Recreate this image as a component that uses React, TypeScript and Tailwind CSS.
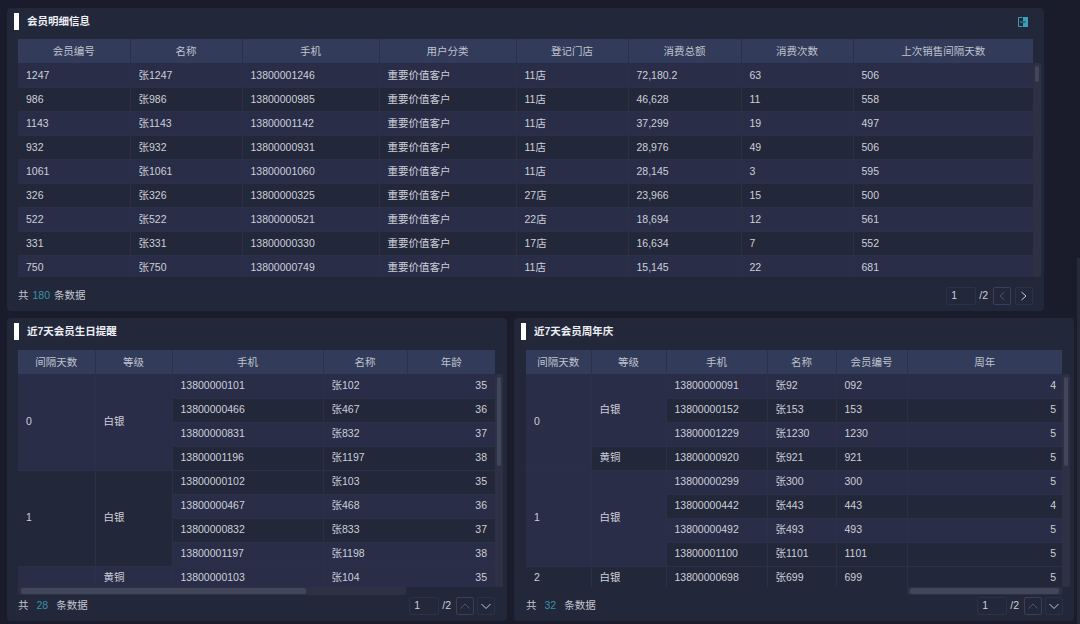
type Level = { name: string; rows: string[][] };
type Group = { day: string; dark?: boolean; levels: Level[] };

const leftGroups: Group[] = [
  { day: "0", levels: [{ name: "白银", rows: [["13800000101", "张102", "35"], ["13800000466", "张467", "36"], ["13800000831", "张832", "37"], ["13800001196", "张1197", "38"]] }] },
  { day: "1", dark: true, levels: [{ name: "白银", rows: [["13800000102", "张103", "35"], ["13800000467", "张468", "36"], ["13800000832", "张833", "37"], ["13800001197", "张1198", "38"]] }] },
  { day: "", levels: [{ name: "黄铜", rows: [["13800000103", "张104", "35"]] }] },
];

const rightGroups: Group[] = [
  { day: "0", levels: [{ name: "白银", rows: [["13800000091", "张92", "092", "4"], ["13800000152", "张153", "153", "5"], ["13800001229", "张1230", "1230", "5"]] }, { name: "黄铜", rows: [["13800000920", "张921", "921", "5"]] }] },
  { day: "1", levels: [{ name: "白银", rows: [["13800000299", "张300", "300", "5"], ["13800000442", "张443", "443", "4"], ["13800000492", "张493", "493", "5"], ["13800001100", "张1101", "1101", "5"]] }] },
  { day: "2", dark: true, levels: [{ name: "白银", rows: [["13800000698", "张699", "699", "5"]] }] },
];

const memberRows = [
  ["1247", "张1247", "13800001246", "重要价值客户", "11店", "72,180.2", "63", "506"],
  ["986", "张986", "13800000985", "重要价值客户", "11店", "46,628", "11", "558"],
  ["1143", "张1143", "13800001142", "重要价值客户", "11店", "37,299", "19", "497"],
  ["932", "张932", "13800000931", "重要价值客户", "11店", "28,976", "49", "506"],
  ["1061", "张1061", "13800001060", "重要价值客户", "11店", "28,145", "3", "595"],
  ["326", "张326", "13800000325", "重要价值客户", "27店", "23,966", "15", "500"],
  ["522", "张522", "13800000521", "重要价值客户", "22店", "18,694", "12", "561"],
  ["331", "张331", "13800000330", "重要价值客户", "17店", "16,634", "7", "552"],
  ["750", "张750", "13800000749", "重要价值客户", "11店", "15,145", "22", "681"],
];

const blueRow = "bg-[#292d48]";
const darkRow = "bg-[#23273a]";
const cell = "border-r border-b border-[#2b3049] px-[8px] text-[10.5px] text-[#cdd0d9] last:border-r-0";

function PanelTitle({ title }: { title: string }) {
  return (
    <div className="flex items-center gap-[8px] pl-[7px]">
      <span className="h-[17px] w-[5px] bg-white" />
      <span className="text-[10.5px] font-bold text-[#eceef2]">{title}</span>
    </div>
  );
}

function HeadRow({ labels }: { labels: string[] }) {
  return (
    <tr className="h-[24px] bg-[#333b5a]">
      {labels.map((label) => (
        <th key={label} className="border-r border-[#2a3150] pt-[2px] text-center text-[10.5px] font-normal text-[#bfc3cf] last:border-r-0">{label}</th>
      ))}
    </tr>
  );
}

function Widths({ widths }: { widths: number[] }) {
  return (
    <colgroup>
      {widths.map((w, i) => <col key={i} style={{ width: w }} />)}
    </colgroup>
  );
}

function GroupBody({ groups, numeric, numericPad, noDivider }: { groups: Group[]; numeric: number; numericPad: string; noDivider?: number }) {
  return (
    <tbody>
      {groups.map((g) => {
        const daySpan = g.levels.reduce((n, l) => n + l.rows.length, 0);
        let index = g.dark ? 1 : 0;
        return g.levels.map((level, li) =>
          level.rows.map((row, ri) => {
            const bg = index++ % 2 === 0 ? blueRow : darkRow;
            return (
              <tr key={row[0]} className={`h-[24px] ${bg}`}>
                {li === 0 && ri === 0 && <td rowSpan={daySpan} className={`${cell} ${g.dark ? darkRow : blueRow}`}>{g.day}</td>}
                {ri === 0 && <td rowSpan={level.rows.length} className={`${cell} ${bg}`}>{level.name}</td>}
                {row.map((v, i) => (
                  <td key={i} className={`${cell} ${i === numeric ? `text-right ${numericPad}` : ""} ${i === noDivider ? "border-r-transparent" : ""}`}>{v}</td>
                ))}
              </tr>
            );
          })
        );
      })}
    </tbody>
  );
}

function Pager({ vertical }: { vertical?: boolean }) {
  return (
    <div className="flex items-center">
      <div className="flex h-[18px] w-[30px] items-center rounded-[2px] border border-[#2c3148] pl-[4px] text-[10.5px] text-[#cdd0d9]">1</div>
      <span className="ml-[3px] text-[10.5px] text-[#cdd0d9]">/2</span>
      <button className="ml-[5px] flex h-[18px] w-[18px] items-center justify-center rounded-[2px] border border-[#3a4058]">
        <svg width="10" height="10" viewBox="0 0 10 10" fill="none" stroke="#4f5469" strokeWidth="1">
          <path d={vertical ? "M0.5 7.5 L5 3 L9.5 7.5" : "M7.5 1 L3 5 L7.5 9"} />
        </svg>
      </button>
      <button className={`flex h-[18px] w-[18px] items-center justify-center rounded-[2px] border border-[#2c3148] ${vertical ? "ml-[3px]" : "ml-[4px]"}`}>
        <svg width="10" height="10" viewBox="0 0 10 10" fill="none" stroke="#c6c9d3" strokeWidth="1">
          <path d={vertical ? "M0.5 3 L5 7.5 L9.5 3" : "M2.5 1 L7 5 L2.5 9"} />
        </svg>
      </button>
    </div>
  );
}

function VScroll({ thumb }: { thumb: string }) {
  return (
    <div className="w-[8px] shrink-0 rounded-[2px] bg-[#2e3144] px-[2px] pt-[3px]">
      <div className={`${thumb} rounded-[2px] bg-[#42465a]`} />
    </div>
  );
}

function Total({ count, gap }: { count: string; gap: string }) {
  return (
    <div className={`flex text-[10.5px] text-[#c2c5cf] ${gap}`}>
      <span>共</span>
      <span className="text-[#3a92a8]">{count}</span>
      <span>条数据</span>
    </div>
  );
}

export default function App() {
  return (
    <div className="relative flex h-[624px] w-[1080px] flex-col gap-[7px] overflow-hidden bg-[#1a1c2b] pl-[7px] pt-[8px] font-['Liberation_Sans','Noto_Sans_CJK_SC',sans-serif]">
      <div className="absolute bottom-0 right-0 top-[258px] w-[3px] bg-[#262938]" />

      <section className="flex h-[303px] w-[1037px] flex-col rounded-[4px] bg-[#22273a] pl-[11px]">
        <div className="-ml-[11px] flex h-[31px] items-center justify-between pb-[4px] pr-[16px]">
          <PanelTitle title="会员明细信息" />
          <svg width="10" height="10" viewBox="0 0 10 10" fill="none">
            <path d="M4.5 0.5 H0.5 V9.5 H4.5" stroke="#39a0b8" />
            <rect x="5" y="0" width="5" height="10" fill="#39a0b8" />
            <path d="M2 5 H7.5" stroke="#1f2a3a" />
            <path d="M2 5 H5" stroke="#39a0b8" />
          </svg>
        </div>
        <table className="w-[1015px] table-fixed border-collapse">
          <Widths widths={[112, 112, 137, 137, 112, 113, 112, 180]} />
          <thead><HeadRow labels={["会员编号", "名称", "手机", "用户分类", "登记门店", "消费总额", "消费次数", "上次销售间隔天数"]} /></thead>
        </table>
        <div className="flex h-[214px]">
          <div className="h-full w-[1015px] overflow-hidden">
            <table className="w-[1015px] table-fixed border-collapse">
              <Widths widths={[112, 112, 137, 137, 112, 113, 112, 180]} />
              <tbody>
                {memberRows.map((row, i) => (
                  <tr key={row[0]} className={`h-[24px] ${i % 2 === 0 ? blueRow : darkRow}`}>
                    {row.map((v, j) => <td key={j} className={`${cell} pt-[2px]`}>{v}</td>)}
                  </tr>
                ))}
              </tbody>
            </table>
          </div>
          <VScroll thumb="h-[16px]" />
        </div>
        <div className="flex flex-1 items-center justify-between pr-[11px] pt-[3px]">
          <Total count="180" gap="gap-[4px]" />
          <Pager />
        </div>
      </section>

      <div className="flex gap-[7px]">
        <section className="flex h-[303px] w-[500px] flex-col rounded-[4px] bg-[#22273a] pl-[11px]">
          <div className="-ml-[11px] flex h-[32px] items-center pb-[5px]"><PanelTitle title="近7天会员生日提醒" /></div>
          <table className="w-[477px] table-fixed border-collapse">
            <Widths widths={[77, 77, 151, 84, 88]} />
            <thead><HeadRow labels={["间隔天数", "等级", "手机", "名称", "年龄"]} /></thead>
          </table>
          <div className="flex h-[213px]">
            <div className="h-full w-[477px] overflow-hidden">
              <table className="w-[477px] table-fixed border-collapse">
                <Widths widths={[77, 77, 151, 84, 88]} />
                <GroupBody groups={leftGroups} numeric={2} numericPad="pr-[8px]" noDivider={1} />
              </table>
            </div>
            <VScroll thumb="h-[89px]" />
          </div>
          <div className="h-[8px] w-[388px] rounded-[2px] bg-[#2e3144] px-[3px] py-[1px]">
            <div className="h-[6px] w-[285px] rounded-[2px] bg-[#42465a]" />
          </div>
          <div className="flex flex-1 items-center justify-between pb-[4px] pr-[12px]">
            <Total count="28" gap="gap-[8px]" />
            <Pager vertical />
          </div>
        </section>

        <section className="flex h-[303px] w-[560px] flex-col rounded-[4px] bg-[#22273a] pl-[12px]">
          <div className="-ml-[12px] flex h-[32px] items-center pb-[5px]"><PanelTitle title="近7天会员周年庆" /></div>
          <table className="w-[536px] table-fixed border-collapse">
            <Widths widths={[65, 75, 101, 69, 71, 155]} />
            <thead><HeadRow labels={["间隔天数", "等级", "手机", "名称", "会员编号", "周年"]} /></thead>
          </table>
          <div className="flex h-[213px]">
            <div className="h-full w-[536px] overflow-hidden">
              <table className="w-[536px] table-fixed border-collapse">
                <Widths widths={[65, 75, 101, 69, 71, 155]} />
                <GroupBody groups={rightGroups} numeric={3} numericPad="pr-[6px]" />
              </table>
            </div>
            <VScroll thumb="h-[89px]" />
          </div>
          <div className="ml-[381px] h-[8px] w-[155px] rounded-[2px] bg-[#2e3144] px-[3px] py-[1px]">
            <div className="h-[6px] w-full rounded-[2px] bg-[#42465a]" />
          </div>
          <div className="flex flex-1 items-center justify-between pb-[4px] pr-[11px]">
            <Total count="32" gap="gap-[8px]" />
            <Pager vertical />
          </div>
        </section>
      </div>
    </div>
  );
}
